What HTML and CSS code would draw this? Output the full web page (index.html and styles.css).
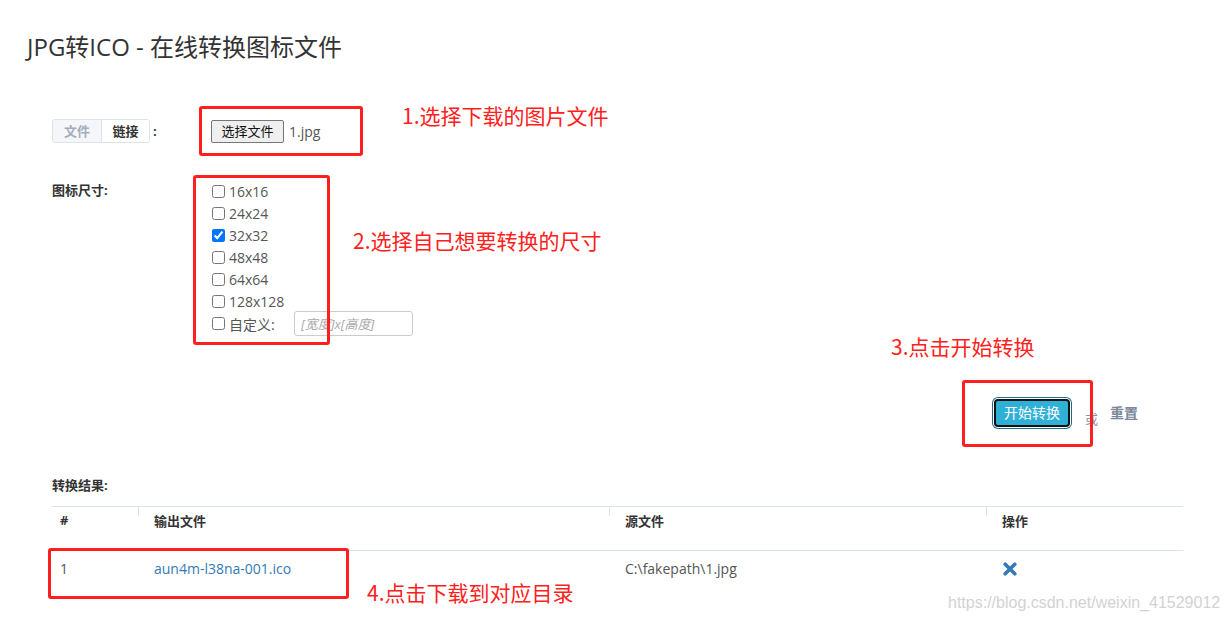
FILE: index.html
```html
<!DOCTYPE html>
<html lang="zh">
<head>
<meta charset="utf-8">
<title>JPG转ICO - 在线转换图标文件</title>
<link rel="stylesheet" href="styles.css">
</head>
<body>
<div class="page">
  <h1 class="title">JPG转ICO - 在线转换图标文件</h1>

  <div class="form-row source-row">
    <div class="label-col">
      <div class="tabs">
        <span class="tab tab-off">文件</span>
        <span class="tab tab-on">链接</span>
      </div>
      <span class="colon">:</span>
    </div>
    <div class="file-input">
      <span class="file-btn">选择文件</span>
      <span class="file-name">1.jpg</span>
    </div>
  </div>

  <div class="form-row size-row">
    <div class="label-col"><span class="field-label">图标尺寸:</span></div>
    <div class="checks">
      <label class="check"><input type="checkbox"><span>16x16</span></label>
      <label class="check"><input type="checkbox"><span>24x24</span></label>
      <label class="check"><input type="checkbox" checked><span>32x32</span></label>
      <label class="check"><input type="checkbox"><span>48x48</span></label>
      <label class="check"><input type="checkbox"><span>64x64</span></label>
      <label class="check"><input type="checkbox"><span>128x128</span></label>
      <label class="check check-custom"><input type="checkbox"><span class="custom-label">自定义:</span><input class="custom-input" type="text" placeholder="[宽度]x[高度]"></label>
    </div>
  </div>

  <div class="actions">
    <button class="start-btn" type="button">开始转换</button>
    <span class="or">或</span>
    <span class="reset">重置</span>
  </div>

  <div class="result-title">转换结果:</div>
  <table class="result">
    <thead>
      <tr><th class="c1">#</th><th class="c2">输出文件</th><th class="c3">源文件</th><th class="c4">操作</th></tr>
    </thead>
    <tbody>
      <tr>
        <td class="c1">1</td>
        <td class="c2"><a class="out-link" href="#">aun4m-l38na-001.ico</a></td>
        <td class="c3">C:\fakepath\1.jpg</td>
        <td class="c4"><svg class="del" width="14" height="14" viewBox="0 0 14 14"><path d="M2.2 2.2 L11.8 11.8 M11.8 2.2 L2.2 11.8" stroke="#337ab7" stroke-width="3.6" stroke-linecap="round"/></svg></td>
      </tr>
    </tbody>
  </table>
</div>

<div class="mark box1"></div>
<div class="note note1">1.选择下载的图片文件</div>
<div class="mark box2"></div>
<div class="note note2">2.选择自己想要转换的尺寸</div>
<div class="note note3">3.点击开始转换</div>
<div class="mark box3"></div>
<div class="mark box4"></div>
<div class="note note4">4.点击下载到对应目录</div>
<div class="watermark">https://blog.csdn.net/weixin_41529012</div>
</body>
</html>
```

FILE: styles.css
```css
* { box-sizing: border-box; }
html, body { margin: 0; padding: 0; }
body {
  width: 1230px;
  height: 622px;
  overflow: hidden;
  background: #fff;
  font-family: "Open Sans", "Noto Sans CJK SC", sans-serif;
  color: #555;
  position: relative;
}
.page {
  width: 1131px;
  margin-left: 52px;
}
.title {
  margin: 32px 0 0 -25px;
  font-size: 24px;
  line-height: 30px;
  font-weight: 400;
  color: #333;
}
.form-row { display: flex; }
.label-col { width: 159px; flex: none; display: flex; align-items: flex-start; }
.source-row { margin-top: 57px; height: 24px; align-items: center; }
.source-row .label-col { align-items: center; }
.tabs {
  display: flex;
  height: 24px;
  border: 1px solid #dde3ea;
  border-radius: 3px;
  overflow: hidden;
}
.tab {
  font-size: 13px;
  font-weight: 700;
  line-height: 22px;
  padding: 0 10px;
}
.tab-off { background: #f4f6f9; color: #a3adbb; border-right: 1px solid #dde3ea; width: 49px; text-align: center; }
.tab-on { background: #fff; color: #333; width: 47px; text-align: center; }
.colon { font-size: 13px; font-weight: 700; color: #333; margin-left: 3px; line-height: 22px; }
.file-input { display: flex; align-items: center; }
.file-btn {
  height: 23px;
  width: 73px;
  border: 1px solid #767676;
  border-radius: 2px;
  background: #efefef;
  color: #111;
  font-size: 13px;
  line-height: 21px;
  text-align: center;
}
.file-name { font-size: 14px; color: #555; margin-left: 5px; }

.size-row { margin-top: 37px; }
.field-label { font-size: 13px; font-weight: 700; color: #333; line-height: 20px; }
.checks { display: flex; flex-direction: column; margin-left: 1px; }
.check {
  display: flex;
  align-items: center;
  height: 22px;
  font-size: 14px;
  color: #555;
}
.check input[type="checkbox"] {
  width: 13px;
  height: 13px;
  margin: 0 4px 0 0;
}
.check-custom { height: 25px; margin-top: -1px; }
.custom-label { width: 65px; }
.custom-input {
  width: 119px;
  height: 25px;
  border: 1px solid #ccc;
  border-radius: 3px;
  padding: 0 6px;
  font-family: "Open Sans", "Noto Sans CJK SC", sans-serif;
  font-size: 13px;
  font-style: italic;
}
.custom-input::placeholder { color: #aaa; font-style: italic; }

.actions {
  display: flex;
  justify-content: flex-end;
  align-items: center;
  padding-right: 45px;
  margin-top: 61px;
  height: 32px;
}
.start-btn {
  width: 76px;
  height: 28px;
  margin-right: 2px;
  background: #2fb0d6;
  border: 2px solid #111;
  border-radius: 4px;
  box-shadow: 0 0 0 1px #fff, 0 0 0 2px #1d6a86;
  color: #fff;
  font-family: "Open Sans", "Noto Sans CJK SC", sans-serif;
  font-size: 14px;
  padding: 0;
  line-height: 24px;
}
.or { font-size: 13px; color: #8a94a4; margin-left: 13px; margin-top: 10px; }
.reset { font-size: 14px; font-weight: 700; color: #7b879b; margin-left: 12px; margin-top: -2px; }

.result-title {
  margin-top: 47px;
  font-size: 13px;
  font-weight: 700;
  color: #333;
  line-height: 18px;
}
.result {
  margin-top: 12px;
  width: 1131px;
  border-collapse: collapse;
  table-layout: fixed;
}
.result th, .result td { text-align: left; padding: 0 0 0 16px; }
.result th {
  height: 44px;
  border-top: 1px solid #dde3ea;
  border-bottom: 1px solid #dde3ea;
  font-size: 13px;
  font-weight: 700;
  color: #333;
  vertical-align: top;
  padding-top: 4px;
  background: linear-gradient(#dde3ea, #dde3ea) no-repeat left top / 1px 9px;
}
.result th.c1 { background: none; }
.result .c1 { width: 86px; padding-left: 8px; }
.result .c2 { width: 471px; }
.result .c3 { width: 377px; }
.result td {
  height: 36px;
  font-size: 14px;
  color: #555;
  vertical-align: middle;
}
.out-link { color: #337ab7; text-decoration: none; }
.del { display: block; margin-left: 1px; }

.mark {
  position: absolute;
  border: 3px solid #ff1f1f;
  border-radius: 3px;
}
.box1 { left: 199px; top: 106px; width: 164px; height: 50px; }
.box2 { left: 193px; top: 175px; width: 137px; height: 170px; }
.box3 { left: 962px; top: 380px; width: 131px; height: 67px; }
.box4 { left: 48px; top: 548px; width: 301px; height: 51px; }
.note {
  position: absolute;
  font-family: "Noto Sans CJK SC", sans-serif;
  font-size: 21px;
  line-height: 26px;
  color: #ff2020;
  white-space: nowrap;
}
.note1 { left: 402px; top: 102px; }
.note2 { left: 353px; top: 227px; }
.note3 { left: 891px; top: 333px; }
.note4 { left: 367px; top: 579px; }
.watermark {
  position: absolute;
  left: 948px;
  top: 594px;
  font-family: "Liberation Sans", Arial, sans-serif;
  font-size: 16px;
  color: #d2d2d2;
  white-space: nowrap;
}
```
